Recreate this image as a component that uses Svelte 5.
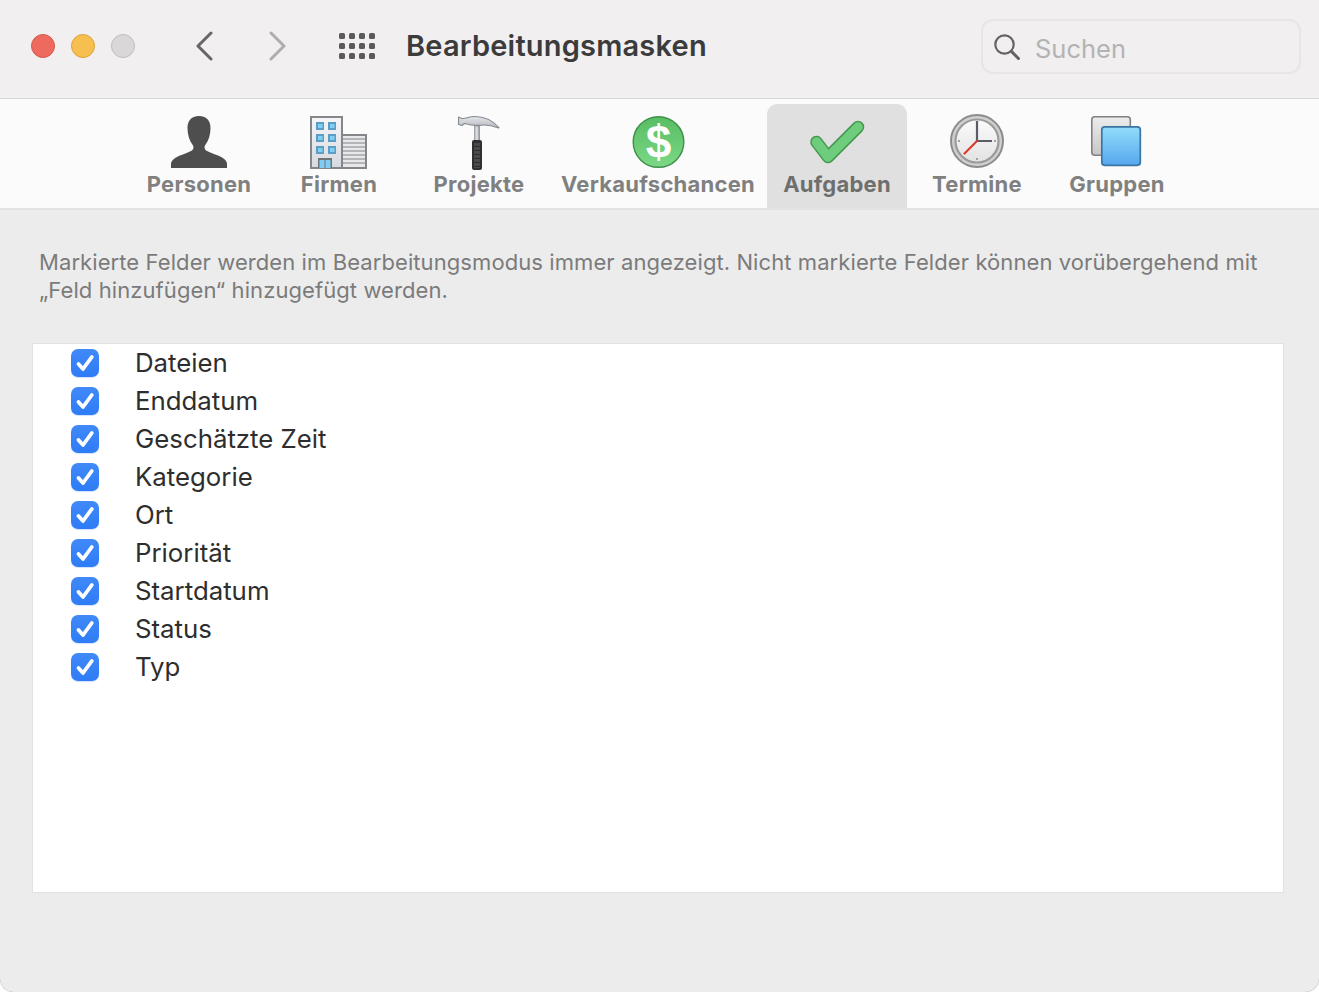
<script>
  const fields = ['Dateien','Enddatum','Geschätzte Zeit','Kategorie','Ort','Priorität','Startdatum','Status','Typ'];
  const dots = [];
  for (const y of [3,13,23]) for (const x of [3,13,23,33]) dots.push({x,y});
  const winY = [122,134,146];
  const stripes = [26,30,34,38,42,46,50];
</script>

<div class="window">
  <header class="titlebar">
    <div class="lights">
      <span class="light red"></span>
      <span class="light yellow"></span>
      <span class="light grey"></span>
    </div>
    <svg class="chev first" width="18" height="30" viewBox="0 0 18 30"><path d="M16 2 L3 15 L16 28" fill="none" stroke="#666" stroke-width="3" stroke-linecap="round" stroke-linejoin="round"/></svg>
    <svg class="chev second" width="18" height="30" viewBox="0 0 18 30"><path d="M2 2 L15 15 L2 28" fill="none" stroke="#aeadad" stroke-width="3" stroke-linecap="round" stroke-linejoin="round"/></svg>
    <svg class="grid" width="36" height="26" viewBox="0 0 36 26">
      {#each dots as d}<rect x={d.x-3} y={d.y-3} width="6" height="6" rx="1.5" fill="#5a5a5a"/>{/each}
    </svg>
    <h1>Bearbeitungsmasken</h1>
    <div class="search">
      <svg width="28" height="28" viewBox="0 0 28 28"><circle cx="11.5" cy="11.5" r="9.2" fill="none" stroke="#636266" stroke-width="2.2"/><path d="M18.4 18.4 L25.5 25.5" stroke="#636266" stroke-width="3" stroke-linecap="round"/></svg>
      <span>Suchen</span>
    </div>
  </header>

  <nav class="toolbar">
    <div class="tab">
      <svg class="ic" viewBox="0 0 60 60"><path d="M30 4 C22 4 18.500 9 18.500 16 C18.500 23 20.500 29 24 33.500 C25 35 24.500 37.500 22.500 38.800 C18 41.500 11 43 6.500 45.800 C3.500 47.700 2 49.500 2 52 L2 56 L58 56 L58 52 C58 49.500 56.500 47.700 53.500 45.800 C49 43 42 41.500 37.500 38.800 C35.500 37.500 35 35 36 33.500 C39.500 29 41.500 23 41.500 16 C41.500 9 38 4 30 4 Z" fill="#4e4e4e"/></svg>
      <span>Personen</span>
    </div>
    <div class="tab">
      <svg class="ic" viewBox="0 0 60 60">
        <defs><linearGradient id="bld" x1="0" y1="0" x2="0" y2="1"><stop offset="0" stop-color="#f5f6f8"/><stop offset="1" stop-color="#d6d9df"/></linearGradient></defs>
        <rect x="33" y="23" width="24" height="33" fill="#e8e8ea" stroke="#85868a" stroke-width="2"/>
        {#each stripes as s}<rect x="34" y={s} width="22" height="2" fill="#b4b5b8"/>{/each}
        <rect x="2" y="5" width="31" height="51" fill="url(#bld)" stroke="#85868a" stroke-width="2"/>
        {#each winY as y}
          <rect x="7" y={y-112} width="8" height="8" fill="#5e9cc4"/><rect x="9" y={y-110} width="4.500" height="4" fill="#7fd0f5"/>
          <rect x="19" y={y-112} width="8" height="8" fill="#5e9cc4"/><rect x="21" y={y-110} width="4.500" height="4" fill="#7fd0f5"/>
        {/each}
        <rect x="9" y="46" width="14" height="10" fill="#6f7478"/>
        <rect x="10.500" y="48" width="5" height="8" fill="#7fcdf5"/><rect x="16.500" y="48" width="5" height="8" fill="#7fcdf5"/>
      </svg>
      <span>Firmen</span>
    </div>
    <div class="tab">
      <svg class="ic" viewBox="0 0 60 60">
        <defs>
          <linearGradient id="shaft" x1="0" y1="0" x2="1" y2="0"><stop offset="0" stop-color="#a8acb2"/><stop offset=".5" stop-color="#e8e9ec"/><stop offset="1" stop-color="#7f848b"/></linearGradient>
          <linearGradient id="head" x1="0" y1="0" x2="0" y2="1"><stop offset="0" stop-color="#e4e6ea"/><stop offset="1" stop-color="#b4b8be"/></linearGradient>
        </defs>
        <rect x="25.500" y="14" width="5" height="16" fill="url(#shaft)" stroke="#80848a" stroke-width=".6"/>
        <path d="M9.500 5 L13 6.500 C17 7 19 4.500 26 4.500 C35 4.500 44 9 50 15.500 L49.500 16 C43 13.500 38 12.500 32 13.200 C27 13.800 21 13 15.500 11.500 L13 13.500 L9.500 12.500 Z" fill="url(#head)" stroke="#868a91" stroke-width="1.100" stroke-linejoin="round"/>
        <rect x="23" y="28" width="10" height="30" rx="2" fill="#303031"/>
        <rect x="25" y="31" width="6" height="25" fill="#4a4a4a"/>
        {#each [34,38,42,46,50,54] as y}<rect x="24" y={y} width="8" height="1" fill="#2e2e2e"/>{/each}
      </svg>
      <span>Projekte</span>
    </div>
    <div class="tab">
      <svg class="ic" viewBox="0 0 60 60">
        <defs><linearGradient id="grn" x1="0" y1="0" x2="0" y2="1"><stop offset="0" stop-color="#58bd63"/><stop offset="1" stop-color="#7cd886"/></linearGradient></defs>
        <circle cx="30.500" cy="30" r="25.300" fill="url(#grn)" stroke="#3d8f49" stroke-width="1.400"/>
        <text x="30.500" y="46" text-anchor="middle" class="dollar">$</text>
      </svg>
      <span>Verkaufschancen</span>
    </div>
    <div class="tab active">
      <svg class="ic" viewBox="0 0 60 60">
        <path d="M9.500 30 L21 45 L51 15" fill="none" stroke="#46984f" stroke-width="12.500" stroke-linecap="round" stroke-linejoin="round"/>
        <path d="M9.500 30 L21 45 L51 15" fill="none" stroke="#6ecd7c" stroke-width="9.500" stroke-linecap="round" stroke-linejoin="round"/>
      </svg>
      <span>Aufgaben</span>
    </div>
    <div class="tab">
      <svg class="ic" viewBox="0 0 60 60">
        <defs><linearGradient id="face" x1="0" y1="0" x2="0" y2="1"><stop offset="0" stop-color="#fbfbfb"/><stop offset="1" stop-color="#e2e2e2"/></linearGradient></defs>
        <circle cx="30" cy="29" r="26" fill="#cfcfcf" stroke="#8c8c8c" stroke-width="2"/>
        <circle cx="30" cy="29" r="21.500" fill="url(#face)" stroke="#9a9a9a" stroke-width="2.200"/>
        <circle cx="30" cy="47" r="1" fill="#8a8a8a"/><circle cx="12" cy="29" r="1" fill="#8a8a8a"/><circle cx="48" cy="29" r="1" fill="#8a8a8a"/>
        <path d="M30 9 L30 29 L45 29" fill="none" stroke="#5c5c66" stroke-width="2.200"/>
        <path d="M30 29 L17.500 41.500" stroke="#dc3a2a" stroke-width="2.200" stroke-linecap="round"/>
      </svg>
      <span>Termine</span>
    </div>
    <div class="tab">
      <svg class="ic" viewBox="0 0 60 60">
        <defs>
          <linearGradient id="gb" x1="0" y1="0" x2="0" y2="1"><stop offset="0" stop-color="#ededed"/><stop offset="1" stop-color="#c6c6c6"/></linearGradient>
          <linearGradient id="gf" x1="0" y1="0" x2="0" y2="1"><stop offset="0" stop-color="#93dcfb"/><stop offset="1" stop-color="#56a7ee"/></linearGradient>
        </defs>
        <rect x="4.800" y="4.800" width="38.500" height="38.500" rx="3" fill="url(#gb)" stroke="#808084" stroke-width="1.600"/>
        <rect x="14.800" y="14.800" width="38.500" height="38.500" rx="3" fill="url(#gf)" stroke="#3a75a3" stroke-width="1.700"/>
      </svg>
      <span>Gruppen</span>
    </div>
  </nav>

  <main class="content">
    <p class="desc">Markierte Felder werden im Bearbeitungsmodus immer angezeigt. Nicht markierte Felder können vorübergehend mit<br>„Feld hinzufügen“ hinzugefügt werden.</p>
    <section class="panel">
      {#each fields as f}
        <div class="row">
          <span class="box"><svg width="28" height="28" viewBox="0 0 28 28"><path d="M7.500 15 L12 20 L20.800 8" fill="none" stroke="#fff" stroke-width="3.800" stroke-linecap="round" stroke-linejoin="round"/></svg></span>
          <span class="name">{f}</span>
        </div>
      {/each}
    </section>
  </main>
</div>

<style>
  :global(body) { margin: 0; background: #fff; }
  .window {
    width: 1319px; height: 992px; overflow: hidden; display: flex; flex-direction: column;
    border-radius: 0 0 14px 14px; background: #ececec; box-shadow: 0 0 1px #777;
    font-family: Inter, "Noto Sans", sans-serif;
  }
  .titlebar {
    height: 92px; flex: none; display: flex; align-items: center; background: #f1eff0;
    border-bottom: 1px solid #d8d7d7; padding: 0 18px 6px 31px;
  }
  .lights { display: flex; gap: 16px; }
  .light { width: 22px; height: 22px; border-radius: 50%; border: 1px solid; display: block; }
  .red { background: #ee6a5f; border-color: #d5584d; }
  .yellow { background: #f6bf50; border-color: #dca33a; }
  .grey { background: #d9d7d8; border-color: #bfbdbd; }
  .chev.first { margin-left: 60px; }
  .chev.second { margin-left: 56px; }
  .grid { margin-left: 52px; }
  h1 { margin: 0 0 0 31px; font-size: 29px; font-weight: 600; color: #3b3b3c; letter-spacing: 0.2px; line-height: 36px; }
  .search {
    margin-left: auto; width: 306px; height: 51px; display: flex; align-items: center; gap: 14px;
    border: 2px solid #e7e5e6; border-radius: 12px; padding-left: 10px;
  }
  .search span { font-size: 25.5px; color: #b4b3b4; margin-top: 5px; }
  .search svg { margin-top: 2px; }
  .toolbar {
    height: 104px; flex: none; display: flex; justify-content: center; align-items: stretch;
    background: #fbfbfb; border-bottom: 2px solid #e2e2e2; padding: 5px 3px 0 0;
  }
  .tab {
    min-width: 140px; padding: 0 12px; box-sizing: border-box; display: flex; flex-direction: column; align-items: center;
    border-radius: 10px 10px 0 0;
  }
  .tab span { font-size: 22px; font-weight: 700; color: #808080; line-height: 26px; white-space: nowrap; margin-top: -1px; letter-spacing: 0.25px; }
  .ic { width: 60px; height: 60px; margin-top: 8px; display: block; }
  .tab.active { background: #e0e0e0; }
  .tab.active span { color: #6e6e6e; }
  .dollar { font-family: "Liberation Sans", sans-serif; font-size: 46px; font-weight: 700; fill: #fff; }
  .content { flex: 1; padding: 38px 35px 0 32px; }
  .desc { margin: 0 0 39px 7px; font-size: 22px; line-height: 28px; color: #7b7b7b; white-space: nowrap; letter-spacing: 0.085px; }
  .panel { height: 548px; background: #fff; border: 1px solid #e2e2e2; }
  .row { height: 38px; display: flex; align-items: center; padding-left: 38px; }
  .box {
    width: 28px; height: 28px; border-radius: 7px; display: block; flex: none;
    background: linear-gradient(#4189f8, #2d7bf6);
    box-shadow: 0 1px 1px rgba(60, 130, 250, 0.25);
  }
  .box svg { display: block; }
  .name { margin-left: 36px; font-size: 25.8px; color: #2e2e2e; line-height: 38px; }
</style>
